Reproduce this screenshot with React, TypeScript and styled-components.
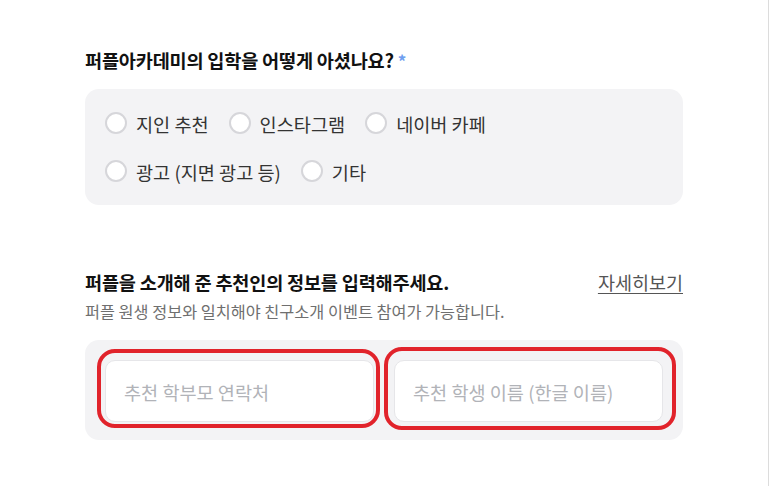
import React from 'react'
import styled, { createGlobalStyle } from 'styled-components'

const GlobalStyle = createGlobalStyle`
  html, body {
    margin: 0;
    padding: 0;
    background: #ffffff;
  }
  body {
    font-family: 'Noto Sans CJK KR', 'Noto Sans', sans-serif;
    color: #222;
  }
`

const Page = styled.div`
  width: 769px;
  min-height: 486px;
  border-right: 1px solid #dcdcdc;
  box-sizing: border-box;
  padding: 48px 0 0 85px;
  background: #fff;
`

const Form = styled.div`
  width: 598px;
  display: flex;
  flex-direction: column;
`

const Title = styled.h2`
  margin: 0;
  font-size: 18.6px;
  line-height: 24px;
  font-weight: 700;
  color: #111;
  letter-spacing: -0.2px;
`

const Required = styled.span`
  color: #6f9ff0;
  margin-left: 4px;
  font-size: 17px;
  font-weight: 700;
`

const Panel = styled.div<{ $top: number; $pad: string }>`
  margin-top: ${(p) => p.$top}px;
  background: #f3f3f5;
  border-radius: 14px;
  padding: ${(p) => p.$pad};
`

const OptionRows = styled.div`
  display: flex;
  flex-direction: column;
  gap: 24px;
`

const OptionRow = styled.div`
  display: flex;
  align-items: center;
  gap: 20px;
`

const Option = styled.label`
  display: flex;
  align-items: center;
  gap: 9px;
  height: 24px;
  font-size: 18.6px;
  color: #333;
  cursor: pointer;
`

const Radio = styled.span`
  width: 22px;
  height: 22px;
  box-sizing: border-box;
  border-radius: 50%;
  border: 2px solid #d6d6da;
  background: #fff;
`

const HeaderRow = styled.div`
  margin-top: 65px;
  display: flex;
  justify-content: space-between;
  align-items: center;
`

const DetailLink = styled.a`
  font-size: 18.5px;
  line-height: 24px;
  color: #555;
  text-decoration: underline;
  text-underline-offset: 3px;
  cursor: pointer;
`

const Hint = styled.p`
  margin: 6px 0 0;
  font-size: 16.3px;
  line-height: 22px;
  color: #6f6f6f;
`

const Inputs = styled.div`
  display: grid;
  grid-template-columns: 1fr 1fr;
  gap: 20px;
`

const Field = styled.div`
  position: relative;
`

const Input = styled.input`
  width: 100%;
  height: 62px;
  box-sizing: border-box;
  border: 1px solid #e6e6e9;
  border-radius: 10px;
  background: #fff;
  padding: 0 18px;
  font-family: inherit;
  font-size: 18.6px;
  color: #222;
  outline: none;

  &::placeholder {
    color: #b1b3b8;
  }
`

const Marker = styled.span<{ $t: number; $r: number; $b: number; $l: number }>`
  position: absolute;
  top: ${(p) => -p.$t}px;
  right: ${(p) => -p.$r}px;
  bottom: ${(p) => -p.$b}px;
  left: ${(p) => -p.$l}px;
  border: 4px solid #e1232b;
  border-radius: 18px;
  pointer-events: none;
`

const firstRow = ['지인 추천', '인스타그램', '네이버 카페']
const secondRow = ['광고 (지면 광고 등)', '기타']

export default function App() {
  return (
    <>
      <GlobalStyle />
      <Page>
        <Form>
          <Title>
            퍼플아카데미의 입학을 어떻게 아셨나요?<Required>*</Required>
          </Title>
          <Panel $top={16} $pad="22px 20px">
            <OptionRows>
              {[firstRow, secondRow].map((row, i) => (
                <OptionRow key={i}>
                  {row.map((label) => (
                    <Option key={label}>
                      <Radio />
                      {label}
                    </Option>
                  ))}
                </OptionRow>
              ))}
            </OptionRows>
          </Panel>

          <HeaderRow>
            <Title>퍼플을 소개해 준 추천인의 정보를 입력해주세요.</Title>
            <DetailLink>자세히보기</DetailLink>
          </HeaderRow>
          <Hint>퍼플 원생 정보와 일치해야 친구소개 이벤트 참여가 가능합니다.</Hint>
          <Panel $top={18} $pad="20px 20px 18px">
            <Inputs>
              <Field>
                <Input placeholder="추천 학부모 연락처" />
                <Marker $t={11} $r={6} $b={6} $l={8} />
              </Field>
              <Field>
                <Input placeholder="추천 학생 이름 (한글 이름)" />
                <Marker $t={13} $r={13} $b={8} $l={10} />
              </Field>
            </Inputs>
          </Panel>
        </Form>
      </Page>
    </>
  )
}
